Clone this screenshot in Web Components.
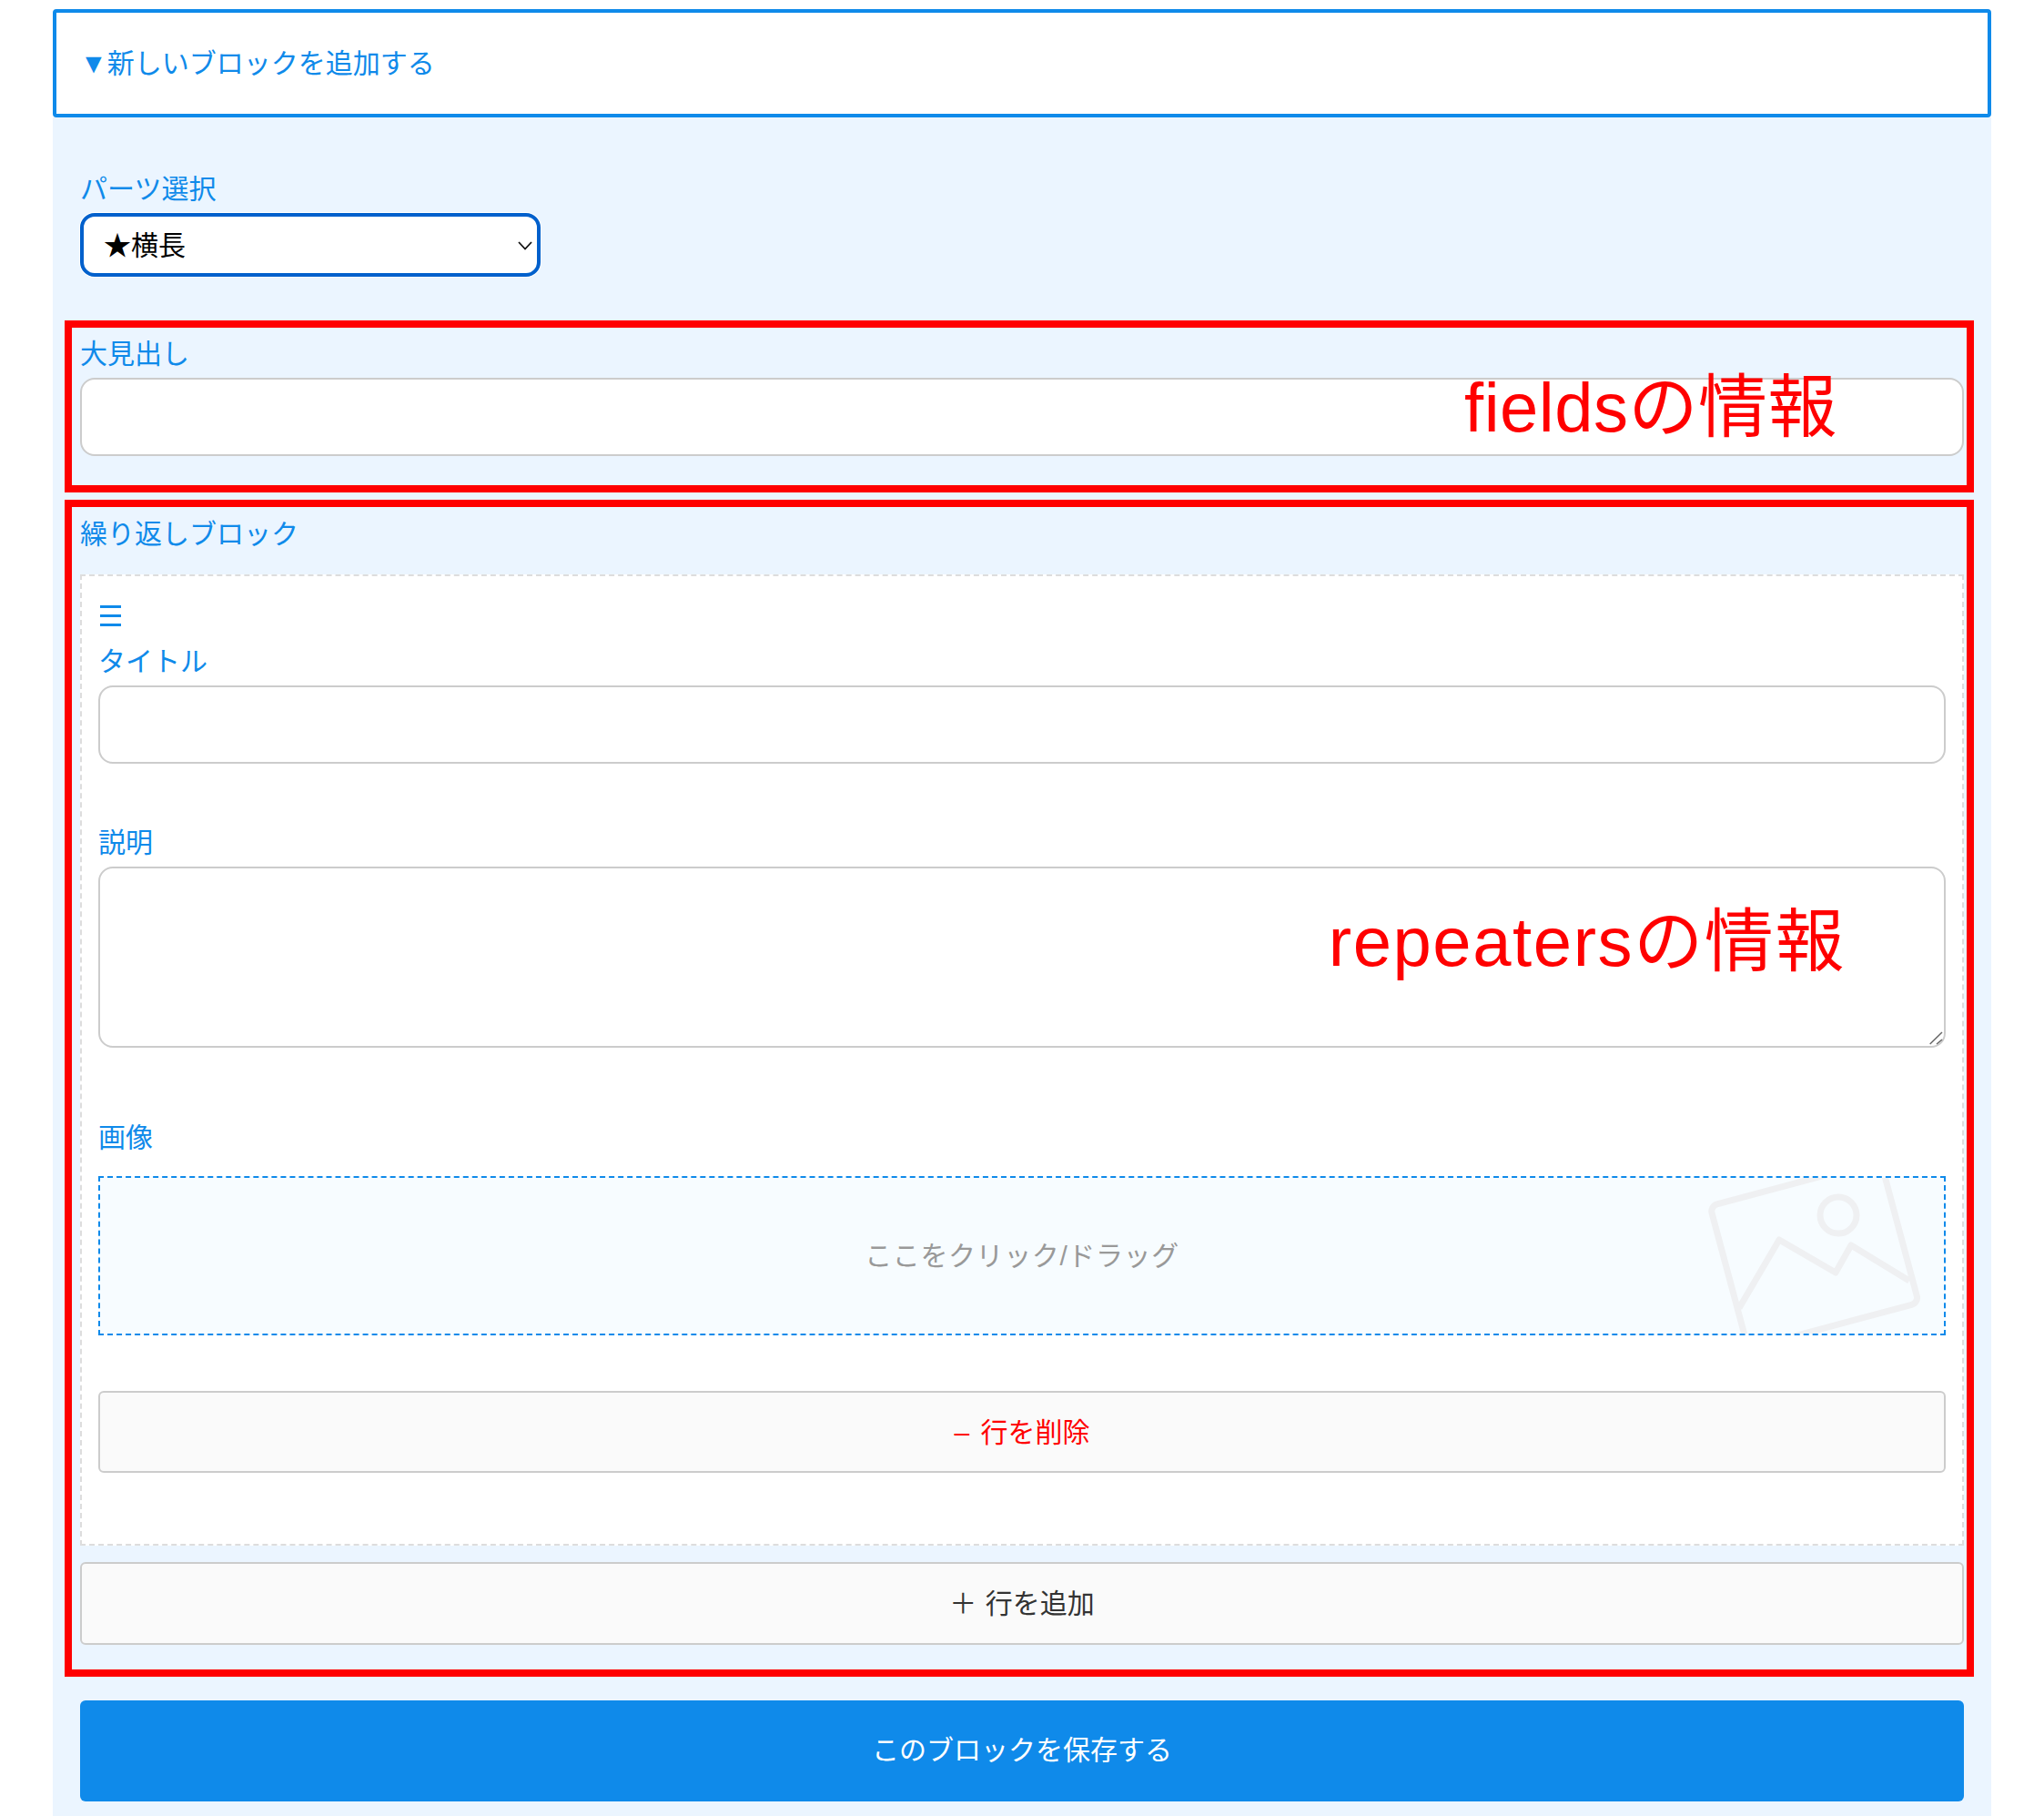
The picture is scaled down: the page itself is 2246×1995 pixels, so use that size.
<!DOCTYPE html>
<html lang="ja">
<head>
<meta charset="utf-8">
<title>ブロック追加</title>
<style>
  html, body { margin: 0; background: #fff; }
  body {
    font-family: "Liberation Sans", "Noto Sans CJK JP", sans-serif;
    font-size: 30px;
    color: #0f8aea;
  }
</style>
</head>
<body>
<block-editor>
  <block-toggle slot="toggle">▼新しいブロックを追加する</block-toggle>
  <form-field label="パーツ選択" class="parts">
    <parts-select></parts-select>
  </form-field>
  <note-frame note="fieldsの情報" note-top="50" note-right="142" note-spacing="0.5" style="margin-top:48px;--frame-bottom:32px">
    <form-field label="大見出し"><text-input></text-input></form-field>
  </note-frame>
  <note-frame note="repeatersの情報" note-top="440" note-right="133" note-spacing="1.6" style="--frame-bottom:27px">
    <form-field label="繰り返しブロック" gap="24" style="margin-top:1px">
      <repeat-row>
        <form-field label="タイトル"><text-input></text-input></form-field>
        <form-field label="説明" style="margin-top:67px"><area-input></area-input></form-field>
        <form-field label="画像" gap="22" style="margin-top:79px"><image-drop></image-drop></form-field>
        <row-button kind="remove" style="margin-top:61px;word-spacing:4px">– 行を削除</row-button>
      </repeat-row>
    </form-field>
    <row-button style="margin-top:18px;height:91px;word-spacing:1px">＋ 行を追加</row-button>
  </note-frame>
  <save-button>このブロックを保存する</save-button>
</block-editor>

<script>
const FONT = '"Liberation Sans", "Noto Sans CJK JP", sans-serif'

class ShadowBase extends HTMLElement {
  constructor() {
    super()
    this.attachShadow({mode: 'open'})
    this.shadowRoot.innerHTML = this.template
  }
}

customElements.define('block-editor', class extends ShadowBase {
  get template() {
    return `<style>
      :host { display: block; padding: 10px 58px 0; }
      .panel {
        display: flex;
        flex-direction: column;
        background: #ebf5ff;
        padding: 59px 30px 17px;
      }
    </style>
    <slot name="toggle"></slot>
    <div class="panel"><slot></slot></div>`
  }
})

customElements.define('block-toggle', class extends ShadowBase {
  get template() {
    return `<style>
      :host {
        display: flex;
        align-items: center;
        box-sizing: border-box;
        height: 119px;
        padding: 0 26px 6px;
        background: #fff;
        border: 4px solid #0f8aea;
        border-radius: 4px;
        color: #0f8aea;
      }
    </style>
    <slot></slot>`
  }
})

customElements.define('form-field', class extends ShadowBase {
  connectedCallback() {
    this.shadowRoot.querySelector('label').textContent = this.getAttribute('label')
    const gap = this.getAttribute('gap')
    if (gap) this.shadowRoot.querySelector('label').style.marginBottom = gap + 'px'
  }
  get template() {
    return `<style>
      :host { display: block; }
      label {
        display: block;
        height: 40px;
        line-height: 40px;
        margin-bottom: 6px;
        color: #0f8aea;
      }
    </style>
    <label></label>
    <slot></slot>`
  }
})

customElements.define('parts-select', class extends ShadowBase {
  get template() {
    return `<style>
      :host {
        display: block;
        position: relative;
        width: 506px;
        height: 70px;
      }
      select {
        appearance: none;
        box-sizing: border-box;
        width: 100%;
        height: 100%;
        margin: 0;
        padding: 0 40px 0 22px;
        font: 30px ${FONT};
        color: #000;
        background: #fff;
        border: 4px solid #0060cc;
        border-radius: 16px;
        box-shadow: 0 0 0 1px #fff;
        outline: none;
      }
      svg { position: absolute; right: 9px; top: 31px; }
    </style>
    <select><option>★横長</option></select>
    <svg width="16" height="10" viewBox="0 0 16 10" fill="none" stroke="#111" stroke-width="1.8">
      <path d="M1 1l7 7.5L15 1"/>
    </svg>`
  }
})

customElements.define('text-input', class extends ShadowBase {
  get template() {
    return `<style>
      :host { display: block; height: 86px; }
      input {
        display: block;
        box-sizing: border-box;
        width: 100%;
        height: 100%;
        margin: 0;
        background: #fff;
        border: 2px solid #ccc;
        border-radius: 16px;
        outline: none;
      }
    </style>
    <input type="text">`
  }
})

customElements.define('area-input', class extends ShadowBase {
  get template() {
    return `<style>
      :host { display: block; position: relative; height: 199px; }
      textarea {
        display: block;
        box-sizing: border-box;
        width: 100%;
        height: 100%;
        margin: 0;
        resize: none;
        background: #fff;
        border: 2px solid #ccc;
        border-radius: 16px;
        outline: none;
      }
      svg { position: absolute; right: 2px; bottom: 2px; }
    </style>
    <textarea></textarea>
    <svg width="20" height="20" viewBox="0 0 20 20" fill="none" stroke="#666" stroke-width="1.5">
      <path d="M4.7 18L18 5M12 18l6-5"/>
    </svg>`
  }
})

customElements.define('image-drop', class extends ShadowBase {
  get template() {
    return `<style>
      :host {
        display: flex;
        align-items: center;
        justify-content: center;
        position: relative;
        box-sizing: border-box;
        height: 175px;
        padding-bottom: 6px;
        overflow: hidden;
        background: #f7fcff;
        border: 2px dashed #0f8aea;
        color: #999;
        letter-spacing: .6px;
      }
      svg { position: absolute; right: 0; top: 0; }
      span { position: relative; }
    </style>
    <svg width="280" height="171" viewBox="0 0 280 171" fill="none" stroke="#eff0f2" stroke-width="7" stroke-linejoin="round">
      <rect x="0" y="0" width="194" height="162" rx="8" transform="translate(23 31) rotate(-15)"/>
      <circle cx="164" cy="41" r="20"/>
      <path d="M55 143L99 68l62 36 17-30 64 39"/>
    </svg>
    <span>ここをクリック/ドラッグ</span>`
  }
})

customElements.define('row-button', class extends ShadowBase {
  connectedCallback() {
    if (this.getAttribute('kind') === 'remove') this.style.color = '#f00'
  }
  get template() {
    return `<style>
      :host {
        display: flex;
        align-items: center;
        justify-content: center;
        box-sizing: border-box;
        height: 90px;
        padding-bottom: 5px;
        background: #fafafa;
        border: 2px solid #ccc;
        border-radius: 6px;
        color: #333;
      }
    </style>
    <slot></slot>`
  }
})

customElements.define('repeat-row', class extends ShadowBase {
  get template() {
    return `<style>
      :host {
        display: block;
        box-sizing: border-box;
        padding: 22px 18px 78px;
        background: #fff;
        border: 2px dashed #ddd;
      }
      .handle {
        display: block;
        margin: 10px 0 19px 2px;
      }
    </style>
    <svg class="handle" width="23" height="23" viewBox="0 0 23 23" fill="none" stroke="#0f8aea" stroke-width="3">
      <path d="M0 1.5h23M0 11.5h23M0 21.5h23"/>
    </svg>
    <slot></slot>`
  }
})

customElements.define('note-frame', class extends ShadowBase {
  connectedCallback() {
    const note = this.shadowRoot.querySelector('.note')
    note.textContent = this.getAttribute('note')
    note.style.top = this.getAttribute('note-top') + 'px'
    note.style.right = this.getAttribute('note-right') + 'px'
    note.style.letterSpacing = this.getAttribute('note-spacing') + 'px'
  }
  get template() {
    return `<style>
      :host {
        display: block;
        position: relative;
        margin: 0 -11px 8px -17px;
        padding: 9px 3px var(--frame-bottom, 31px) 9px;
        border: 8px solid #f00;
      }
      .note {
        position: absolute;
        font-size: 76px;
        line-height: 1;
        color: #f00;
        white-space: nowrap;
      }
    </style>
    <slot></slot>
    <span class="note"></span>`
  }
})

customElements.define('save-button', class extends ShadowBase {
  get template() {
    return `<style>
      :host {
        display: flex;
        align-items: center;
        justify-content: center;
        height: 111px;
        margin-top: 18px;
        padding-bottom: 8px;
        box-sizing: border-box;
        background: #0f8aea;
        border-radius: 6px;
        color: #fff;
      }
    </style>
    <slot></slot>`
  }
})
</script>
</body>
</html>
